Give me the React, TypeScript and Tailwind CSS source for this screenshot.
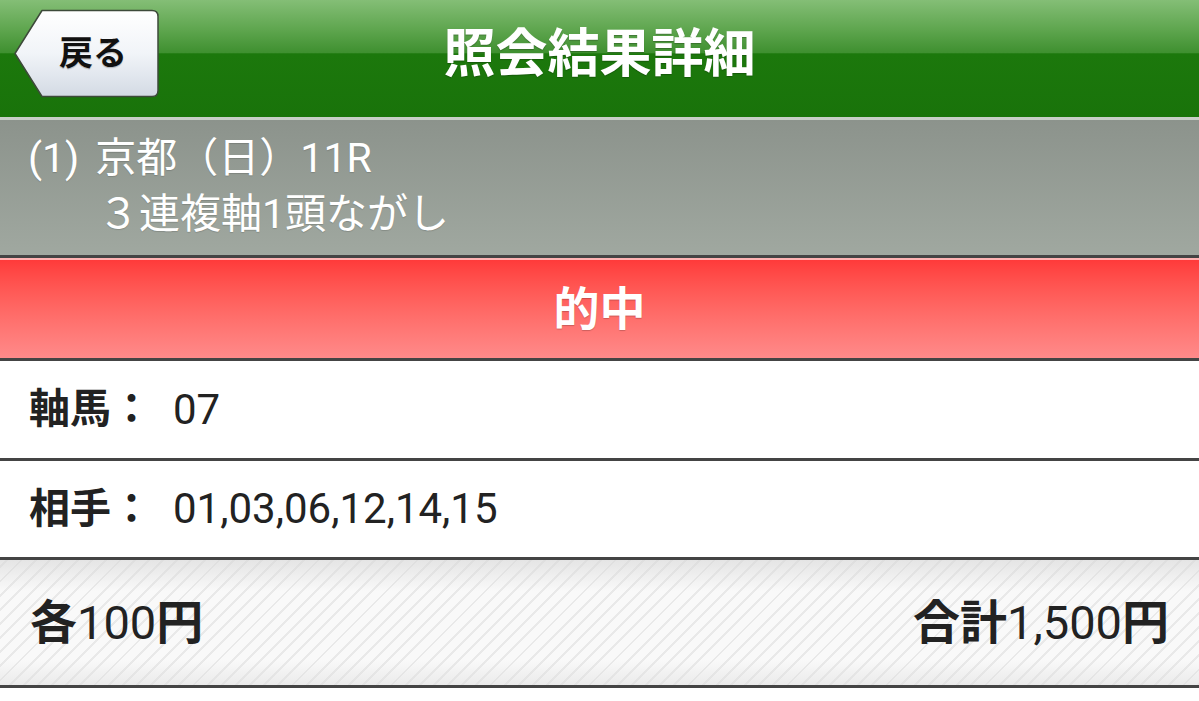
import React from "react";

function BackButton() {
  return (
    <div className="absolute left-[13px] top-[9px] w-[147px] h-[90px]">
      <svg width="147" height="90" viewBox="0 0 147 90" className="absolute inset-0">
        <defs>
          <linearGradient id="bb" x1="0" y1="0" x2="0" y2="1">
            <stop offset="0" stopColor="#ffffff" />
            <stop offset="0.5" stopColor="#f1f4f8" />
            <stop offset="1" stopColor="#d3dae4" />
          </linearGradient>
        </defs>
        <path
          d="M2 44.5 L29 1.5 H139 Q145 1.5 145 7.5 V81.5 Q145 87.5 139 87.5 H29 Z"
          fill="url(#bb)"
          stroke="#3d4a3a"
          strokeWidth="1.5"
          strokeLinejoin="round"
        />
      </svg>
      <span className="absolute left-[46px] top-[27px] text-[34px] leading-none font-bold text-[#111] [text-shadow:0_0_2px_#ffffff,0_1px_1px_rgba(0,0,0,0.35)]">
        戻る
      </span>
    </div>
  );
}

export default function App() {
  return (
    <div className="w-[1199px] h-[701px] overflow-hidden bg-white font-['Roboto','Noto_Sans_CJK_JP',sans-serif]">
      <header className="relative h-[117px] flex items-center justify-center bg-[linear-gradient(to_bottom,#84be76_0%,#5fa64f_25%,#3f9030_45%,#1c780c_46%,#19730a_100%)]">
        <BackButton />
        <h1 className="text-white font-bold text-[52px] leading-none pb-[8px] [text-shadow:0_1px_1px_rgba(0,0,0,0.25)]">
          照会結果詳細
        </h1>
      </header>
      <div className="h-[3px] bg-[#c8cec8]" />
      <section className="h-[135px] pt-[10px] bg-linear-to-b from-[#8c938c] to-[#a0a8a0] text-white text-[41px] leading-[56px] [text-shadow:0_1px_1px_rgba(0,0,0,0.15)]">
        <div className="pl-[28px] flex">
          <span>(1)</span>
          <span className="ml-[16px]">京都（日）</span>
          <span>11R</span>
        </div>
        <div className="pl-[98px]">３連複軸1頭ながし</div>
      </section>
      <div className="h-[3px] bg-[#444]" />
      <div className="h-[2px] bg-[#ffb3b3]" />
      <div className="h-[98px] flex items-center justify-center bg-linear-to-b from-[#ff3a3a] to-[#ff8a8a]">
        <span className="text-white font-bold text-[46px] leading-none [text-shadow:0_1px_1px_rgba(0,0,0,0.2)]">
          的中
        </span>
      </div>
      <div className="h-[3px] bg-[#444]" />
      <div className="h-[97px] flex items-center pl-[29px] text-[#222]">
        <span className="w-[144px] font-bold text-[41px] leading-none">軸馬：</span>
        <span className="text-[42px] leading-none">07</span>
      </div>
      <div className="h-[3px] bg-[#444]" />
      <div className="h-[96px] flex items-center pl-[29px] text-[#222]">
        <span className="w-[144px] font-bold text-[41px] leading-none">相手：</span>
        <span className="text-[42px] leading-none">01,03,06,12,14,15</span>
      </div>
      <div className="h-[3px] bg-[#444]" />
      <div className="h-[125px] flex items-center justify-between pl-[30px] pr-[30px] text-[#222] bg-[linear-gradient(to_bottom,rgba(215,215,215,0.6)_0%,rgba(240,240,240,0)_25%,rgba(240,240,240,0)_80%,rgba(220,220,220,0.5)_100%),repeating-linear-gradient(-45deg,#e9e9e9_0px,#e9e9e9_2px,#f9f9f9_2px,#f9f9f9_10px)]">
        <span className="text-[47px] leading-none">
          <span className="font-bold">各</span>100<span className="font-bold">円</span>
        </span>
        <span className="text-[47px] leading-none">
          <span className="font-bold">合計</span>1,500<span className="font-bold">円</span>
        </span>
      </div>
      <div className="h-[3px] bg-[#444]" />
    </div>
  );
}
